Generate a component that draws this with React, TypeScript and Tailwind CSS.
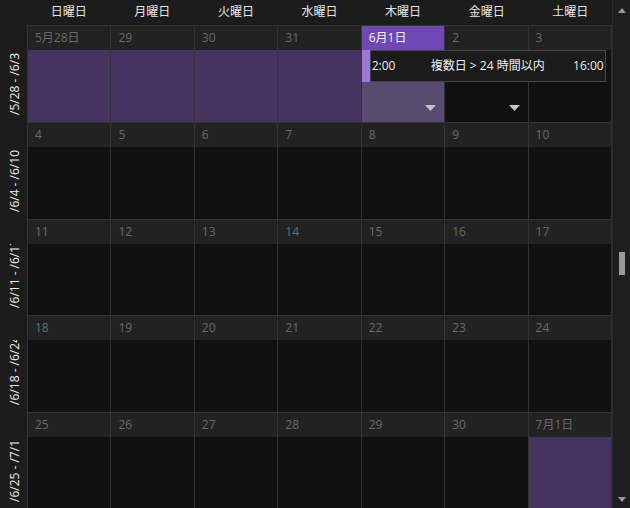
import React from "react";

const weekdays = ["日曜日", "月曜日", "火曜日", "水曜日", "木曜日", "金曜日", "土曜日"];

const weeks: { label: string; days: string[] }[] = [
  { label: "/5/28 - /6/3", days: ["5月28日", "29", "30", "31", "6月1日", "2", "3"] },
  { label: "/6/4 - /6/10", days: ["4", "5", "6", "7", "8", "9", "10"] },
  { label: "/6/11 - /6/17", days: ["11", "12", "13", "14", "15", "16", "17"] },
  { label: "/6/18 - /6/24", days: ["18", "19", "20", "21", "22", "23", "24"] },
  { label: "/6/25 - /7/1", days: ["25", "26", "27", "28", "29", "30", "7月1日"] },
];

function Tri() {
  return (
    <svg width="11" height="6" viewBox="0 0 11 6" className="absolute right-[8px] bottom-[11px]">
      <path d="M0 0 L11 0 L5.5 6 Z" fill="#c4c4c4" />
    </svg>
  );
}

export default function App() {
  return (
    <div className="w-[630px] h-[508px] bg-[#1c1c1c] flex overflow-hidden font-['Open_Sans','Noto_Sans_CJK_JP',sans-serif] text-[12px]">
      <div className="w-[612px] h-full flex flex-col">
        <div className="h-[25px] flex shrink-0">
          <div className="w-[27px]" />
          <div className="flex-1 grid grid-cols-7">
            {weekdays.map((d) => (
              <div key={d} className="flex items-center justify-center text-[#e6e6e6] leading-none pb-[2px]">
                {d}
              </div>
            ))}
          </div>
        </div>
        <div className="flex-1 flex flex-col">
          {weeks.map((w, wi) => (
            <div key={wi} className="flex-1 flex min-h-0">
              <div className="w-[27px] flex flex-col">
                <div className="h-[25px] shrink-0" />
                <div className="flex-1 overflow-hidden flex flex-col items-center justify-end pb-[7px] min-h-0">
                  <span className="[writing-mode:vertical-rl] rotate-180 whitespace-nowrap text-[#eeeeee] leading-none ml-[3px]">
                    {w.label}
                  </span>
                </div>
              </div>
              <div className="flex-1 relative grid grid-cols-7 border-l border-[#333333]">
                {w.days.map((d, di) => {
                  const isToday = wi === 0 && di === 4;
                  const purpleBody = (wi === 0 && di < 4) || (wi === 4 && di === 6);
                  const bodyColor = isToday ? "bg-[#584a70]" : purpleBody ? "bg-[#44345f]" : "bg-[#111111]";
                  return (
                    <div key={di} className="flex flex-col border-t border-r border-[#333333] min-h-0">
                      <div
                        className={`h-[24px] shrink-0 flex items-center pl-[7px] leading-none ${
                          isToday ? "bg-[#7048b4] text-[#f2f2f2]" : "bg-[#222222] text-[#6a6a6a]"
                        }`}
                      >
                        {d}
                      </div>
                      <div className={`flex-1 relative ${bodyColor}`}>
                        {wi === 0 && (di === 4 || di === 5) && <Tri />}
                      </div>
                    </div>
                  );
                })}
                {wi === 0 && (
                  <div className="absolute left-[57.1428%] top-[25px] h-[32px] w-[244px] flex">
                    <div className="w-[8px] h-full bg-[#9a7ad2]" />
                    <div className="flex-1 h-full bg-[#1b1b1b] border border-[#474747] grid grid-cols-[1fr_auto_1fr] items-center text-[#f0f0f0] leading-none px-[1px]">
                      <span>2:00</span>
                      <span>複数日 &gt; 24 時間以内</span>
                      <span className="text-right">16:00</span>
                    </div>
                  </div>
                )}
              </div>
            </div>
          ))}
        </div>
      </div>
      <div className="w-[18px] h-full bg-[#1e1e1e] border-l border-[#2a2a2a] relative">
        <svg width="8" height="5" viewBox="0 0 8 5" className="absolute left-[5px] top-[8px]">
          <path d="M0 5 L8 5 L4 0 Z" fill="#9a9a9a" />
        </svg>
        <div className="absolute left-[6px] top-[252px] w-[6px] h-[23px] bg-[#9a9a9a]" />
        <svg width="8" height="5" viewBox="0 0 8 5" className="absolute left-[5px] top-[497px]">
          <path d="M0 0 L8 0 L4 5 Z" fill="#9a9a9a" />
        </svg>
      </div>
    </div>
  );
}
